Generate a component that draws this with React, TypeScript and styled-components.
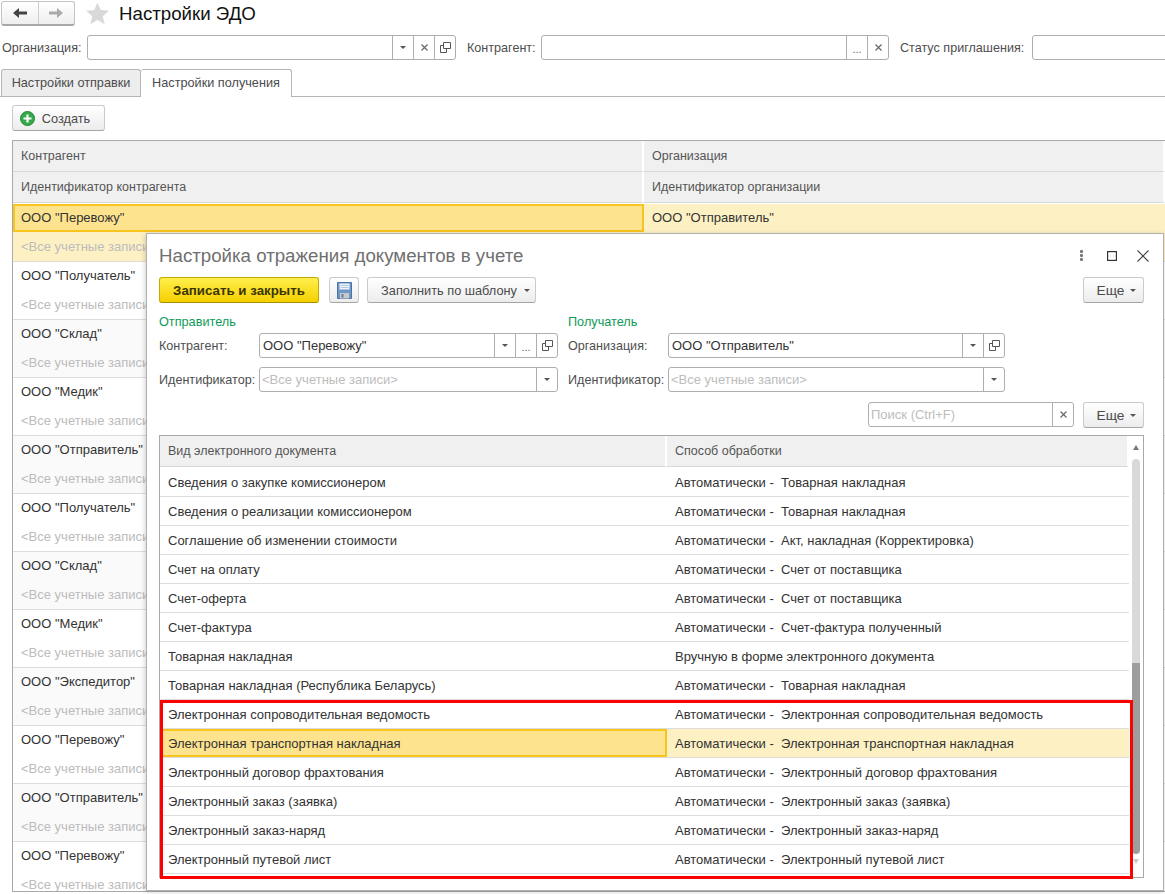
import { FC, ReactNode } from 'react';
import styled, { createGlobalStyle } from 'styled-components';

const GlobalStyle = createGlobalStyle`
  html, body {
    margin: 0;
    padding: 0;
    width: 1165px;
    height: 894px;
    overflow: hidden;
    background: #ffffff;
  }
  * {
    box-sizing: border-box;
  }
`;

const Page = styled.div`
  position: relative;
  width: 1165px;
  height: 894px;
  overflow: hidden;
  font-family: 'Liberation Sans', Arial, sans-serif;
  font-size: 13px;
  color: #4b4b4b;
`;

const TitleBar = styled.div`
  display: flex;
  align-items: center;
  height: 25px;
  margin: 1px 0 0 1px;
`;

const NavGroup = styled.div`
  display: flex;
  width: 74px;
  height: 25px;
  border: 1px solid #c4c4c4;
  border-bottom: 2px solid #a8a8a8;
  border-radius: 3px;
  background: linear-gradient(#ffffff, #efefef);
`;

const NavButton = styled.div<{ $divider?: boolean }>`
  flex: 1;
  display: flex;
  align-items: center;
  justify-content: center;
  border-left: ${(p) => (p.$divider ? '1px solid #d0d0d0' : 'none')};
`;

const StarWrap = styled.div`
  display: flex;
  margin: 0 10px 0 11px;
`;

const PageTitle = styled.h1`
  margin: 0;
  font-size: 18.7px;
  font-weight: 400;
  color: #111111;
`;

const FilterRow = styled.div`
  display: flex;
  align-items: center;
  height: 25px;
  margin-top: 9px;
  white-space: nowrap;
`;

const Label = styled.span<{ $ml?: number; $w?: number }>`
  flex: none;
  margin-left: ${(p) => p.$ml ?? 0}px;
  width: ${(p) => (p.$w ? `${p.$w}px` : 'auto')};
  font-size: 12.6px;
  color: #4e4e4e;
`;

const Field = styled.div<{ $w: number; $ml?: number }>`
  flex: none;
  display: flex;
  width: ${(p) => p.$w}px;
  height: 25px;
  margin-left: ${(p) => p.$ml ?? 0}px;
  border: 1px solid #aeaeae;
  border-radius: 3px;
  background: #ffffff;
`;

const FieldValue = styled.div<{ $muted?: boolean }>`
  flex: 1;
  min-width: 0;
  padding-left: ${(p) => (p.$muted ? 2 : 3)}px;
  line-height: 23px;
  white-space: nowrap;
  overflow: hidden;
  color: ${(p) => (p.$muted ? '#bdbdbd' : '#333333')};
`;

const FieldButton = styled.div`
  flex: none;
  display: flex;
  align-items: center;
  justify-content: center;
  width: 21px;
  border-left: 1px solid #aeaeae;
  color: #666666;
`;

const Tabs = styled.div`
  display: flex;
  height: 28px;
  margin-top: 9px;
  padding-left: 1px;
  border-bottom: 1px solid #b5b5b5;
`;

const Tab = styled.div<{ $active?: boolean }>`
  width: ${(p) => (p.$active ? 151 : 140)}px;
  height: ${(p) => (p.$active ? 28 : 27)}px;
  padding-top: 6px;
  font-size: 12.7px;
  text-align: center;
  border: 1px solid #b5b5b5;
  border-left-width: ${(p) => (p.$active ? 0 : 1)}px;
  border-bottom: none;
  border-radius: 3px 3px 0 0;
  background: ${(p) => (p.$active ? '#ffffff' : '#ededed')};
  color: #4b4b4b;
`;

const Toolbar = styled.div`
  height: 27px;
  margin: 8px 0 8px 12px;
`;

const Button = styled.div<{ $w: number; $ml?: number; $h?: number; $pl?: number; $pr?: number }>`
  flex: none;
  display: flex;
  align-items: center;
  justify-content: center;
  gap: 7px;
  width: ${(p) => p.$w}px;
  height: ${(p) => p.$h ?? 26}px;
  margin-left: ${(p) => p.$ml ?? 0}px;
  padding-left: ${(p) => p.$pl ?? 0}px;
  padding-right: ${(p) => p.$pr ?? 0}px;
  border: 1px solid #cbcbcb;
  border-bottom-color: #a5a5a5;
  border-radius: 3px;
  background: linear-gradient(#ffffff, #ececec);
  font-size: 12.75px;
  color: #4b4b4b;
`;

const MoreButton = styled(Button)`
  gap: 6px;
  padding-left: 6px;
  font-size: 13.7px;
`;

const PrimaryButton = styled(Button)`
  border-color: #c4aa00;
  border-bottom-color: #a58f00;
  background: linear-gradient(#fff04d, #f5d000);
  color: #3c3500;
  font-weight: 700;
  font-size: 13.3px;
`;

const BackTable = styled.div`
  margin-left: 12px;
  border-top: 1px solid #a9a9a9;
  border-left: 1px solid #a9a9a9;
  border-bottom: 1px solid #a9a9a9;
  height: 752px;
  overflow: hidden;
`;

const Row = styled.div<{ $cols: string; $h?: number; $bg?: string; $line?: string }>`
  display: grid;
  grid-template-columns: ${(p) => p.$cols};
  height: ${(p) => p.$h ?? 29}px;
  background: ${(p) => p.$bg ?? 'transparent'};
  border-bottom: 1px solid ${(p) => p.$line ?? 'transparent'};
`;

const HeaderCell = styled.div<{ $pad?: number }>`
  padding-left: ${(p) => p.$pad ?? 8}px;
  line-height: 30px;
  font-size: 12.5px;
  background: #f0f0f0;
  border-right: 2px solid #ffffff;
  border-bottom: 1px solid #d8d8d8;
  color: #555555;
  white-space: nowrap;
`;

const Cell = styled.div<{ $muted?: boolean; $current?: boolean; $pad?: number; $shift?: number }>`
  padding-left: ${(p) => (p.$pad ?? 8) - (p.$current ? 2 : 0)}px;
  line-height: ${(p) => (p.$current ? 24 : 28) + (p.$shift ?? 0)}px;
  white-space: pre;
  overflow: hidden;
  color: ${(p) => (p.$muted ? '#bcbcbc' : '#333333')};
  background: ${(p) => (p.$current ? '#fde38e' : 'transparent')};
  border: ${(p) => (p.$current ? '2px solid #f7c51e' : 'none')};
`;

const Modal = styled.div`
  position: absolute;
  left: 146px;
  top: 233px;
  width: 1018px;
  height: 658px;
  padding: 0 19px 0 12px;
  background: #ffffff;
  border: 1px solid #b0b0b0;
  box-shadow: -1px 1px 5px rgba(0, 0, 0, 0.18);
`;

const ModalHead = styled.div`
  display: flex;
  align-items: center;
  justify-content: space-between;
  height: 43px;
`;

const ModalTitle = styled.div`
  font-size: 18.7px;
  color: #6f6f6f;
`;

const WindowIcons = styled.div`
  display: flex;
  align-items: center;
  gap: 20px;
  margin-right: -5px;

  svg:first-child {
    margin-right: 4px;
  }
`;

const CommandBar = styled.div`
  display: flex;
  align-items: center;
  justify-content: space-between;
`;

const CommandGroup = styled.div`
  display: flex;
  align-items: center;
`;

const Columns = styled.div`
  display: flex;
  margin-top: 12px;
`;

const FieldColumn = styled.div<{ $w: number }>`
  flex: none;
  width: ${(p) => p.$w}px;
`;

const GroupTitle = styled.div`
  height: 18px;
  line-height: 14px;
  font-size: 12.7px;
  color: #0d9b58;
`;

const FormRow = styled.div<{ $mt?: number }>`
  display: flex;
  align-items: center;
  margin-top: ${(p) => p.$mt ?? 0}px;
`;

const SearchRow = styled.div`
  display: flex;
  justify-content: flex-end;
  margin-top: 10px;
`;

const DocTable = styled.div`
  position: relative;
  height: 443px;
  margin-top: 7px;
  padding-right: 14px;
  border: 1px solid #a9a9a9;
  overflow: hidden;
`;

const ScrollBar = styled.div`
  position: absolute;
  top: 0;
  right: 0;
  bottom: 0;
  width: 14px;
  display: flex;
  flex-direction: column;
  align-items: center;
  background: #ffffff;
`;

const ScrollTrack = styled.div`
  width: 8px;
  height: 395px;
  margin-top: 9px;
  border-radius: 4px;
  background: linear-gradient(#d9d9d9 0 204px, #9d9d9d 204px);
`;

const ScrollArrow = styled.div<{ $up?: boolean }>`
  width: 0;
  height: 0;
  margin-top: ${(p) => (p.$up ? 9 : 5)}px;
  border-left: 3px solid transparent;
  border-right: 3px solid transparent;
  border-bottom: ${(p) => (p.$up ? '5px solid #777777' : 'none')};
  border-top: ${(p) => (p.$up ? 'none' : '5px solid #cccccc')};
`;

const RedFrame = styled.div`
  position: absolute;
  left: 160px;
  top: 700px;
  width: 973px;
  height: 179px;
  border: 3px solid #ff0000;
  pointer-events: none;
`;

const Caret = styled.span`
  display: inline-block;
  width: 0;
  height: 0;
  border-left: 3px solid transparent;
  border-right: 3px solid transparent;
  border-top: 3px solid #555555;
`;

const Dots = styled.span`
  font-size: 11px;
  line-height: 1;
  color: #666666;
  margin-top: 4px;
`;

const OpenIcon: FC = () => (
  <svg width="11" height="11" viewBox="0 0 11 11" fill="none" stroke="#555" strokeWidth="1">
    <path d="M3.5 0.5h7v6h-7z" />
    <path d="M3.5 3.5h-3v7h6v-4" />
  </svg>
);

const CrossIcon: FC = () => (
  <svg width="7" height="7" viewBox="0 0 7 7" stroke="#666" strokeWidth="1.2">
    <path d="M0.5 0.5l6 6M6.5 0.5l-6 6" />
  </svg>
);

const Arrow: FC<{ dir: 'left' | 'right'; color: string }> = ({ dir, color }) => (
  <svg width="14" height="10" viewBox="0 0 14 10" fill={color}>
    {dir === 'left' ? <path d="M0 5l6-5v3.500h8v3H6V10z" /> : <path d="M14 5L8 0v3.500H0v3h8V10z" />}
  </svg>
);

const Star: FC = () => (
  <svg width="23" height="23" viewBox="0 0 23 22" fill="#d9d9d9">
    <path d="M11.500 0l3.300 7.600 8.200.7-6.200 5.400 1.900 8.100-7.200-4.300-7.200 4.300 1.900-8.100L0 8.300l8.200-.7z" />
  </svg>
);

const PlusIcon: FC = () => (
  <svg width="15" height="15" viewBox="0 0 15 15">
    <circle cx="7.500" cy="7.500" r="7" fill="#35a94a" stroke="#1f8a35" />
    <path d="M7.500 3.500v8M3.500 7.500h8" stroke="#ffffff" strokeWidth="2.200" />
  </svg>
);

const SaveIcon: FC = () => (
  <svg width="15" height="17" viewBox="0 0 15 17">
    <path d="M0.500 0.500h14v16h-14z" fill="#6f97c6" stroke="#4a74a6" />
    <rect x="2.500" y="1.500" width="10" height="6" fill="#eef3f9" />
    <path d="M3.500 3.500h8M3.500 5.500h8" stroke="#b5c8de" />
    <rect x="3" y="11" width="9" height="5.500" fill="#c9c9c9" />
    <rect x="4.500" y="12" width="2" height="3.500" fill="#5a7da6" />
  </svg>
);

const KebabIcon: FC = () => (
  <svg width="3" height="11" viewBox="0 0 3 11" fill="#777">
    <rect y="0" width="3" height="3" rx="1" />
    <rect y="4" width="3" height="3" rx="1" />
    <rect y="8" width="3" height="3" rx="1" />
  </svg>
);

const MaximizeIcon: FC = () => (
  <svg width="10" height="10" viewBox="0 0 10 10" fill="none" stroke="#333" strokeWidth="1.200">
    <rect x="0.600" y="0.600" width="8.800" height="8.800" />
  </svg>
);

const CloseIcon: FC = () => (
  <svg width="12" height="12" viewBox="0 0 12 12" stroke="#444" strokeWidth="1.100">
    <path d="M0.500 0.500l11 11M11.500 0.500l-11 11" />
  </svg>
);

const ActionField: FC<{
  w: number;
  ml?: number;
  value?: string;
  muted?: boolean;
  children?: ReactNode;
}> = ({ w, ml, value, muted, children }) => (
  <Field $w={w} $ml={ml}>
    <FieldValue $muted={muted}>{value}</FieldValue>
    {children}
  </Field>
);

const backRows = [
  'ООО "Перевожу"',
  'ООО "Получатель"',
  'ООО "Склад"',
  'ООО "Медик"',
  'ООО "Отправитель"',
  'ООО "Получатель"',
  'ООО "Склад"',
  'ООО "Медик"',
  'ООО "Экспедитор"',
  'ООО "Перевожу"',
  'ООО "Отправитель"',
  'ООО "Перевожу"',
];

const docRows = [
  ['Сведения о закупке комиссионером', 'Автоматически -  Товарная накладная'],
  ['Сведения о реализации комиссионером', 'Автоматически -  Товарная накладная'],
  ['Соглашение об изменении стоимости', 'Автоматически -  Акт, накладная (Корректировка)'],
  ['Счет на оплату', 'Автоматически -  Счет от поставщика'],
  ['Счет-оферта', 'Автоматически -  Счет от поставщика'],
  ['Счет-фактура', 'Автоматически -  Счет-фактура полученный'],
  ['Товарная накладная', 'Вручную в форме электронного документа'],
  ['Товарная накладная (Республика Беларусь)', 'Автоматически -  Товарная накладная'],
  ['Электронная сопроводительная ведомость', 'Автоматически -  Электронная сопроводительная ведомость'],
  ['Электронная транспортная накладная', 'Автоматически -  Электронная транспортная накладная'],
  ['Электронный договор фрахтования', 'Автоматически -  Электронный договор фрахтования'],
  ['Электронный заказ (заявка)', 'Автоматически -  Электронный заказ (заявка)'],
  ['Электронный заказ-наряд', 'Автоматически -  Электронный заказ-наряд'],
  ['Электронный путевой лист', 'Автоматически -  Электронный путевой лист'],
];

const BACK_COLS = '631px 1fr';
const DOC_COLS = '507px 1fr';

export default function App() {
  return (
    <Page>
      <GlobalStyle />
      <TitleBar>
        <NavGroup>
          <NavButton>
            <Arrow dir="left" color="#444444" />
          </NavButton>
          <NavButton $divider>
            <Arrow dir="right" color="#aaaaaa" />
          </NavButton>
        </NavGroup>
        <StarWrap>
          <Star />
        </StarWrap>
        <PageTitle>Настройки ЭДО</PageTitle>
      </TitleBar>

      <FilterRow>
        <Label $ml={2} $w={85}>Организация:</Label>
        <ActionField w={369}>
          <FieldButton><Caret /></FieldButton>
          <FieldButton><CrossIcon /></FieldButton>
          <FieldButton><OpenIcon /></FieldButton>
        </ActionField>
        <Label $ml={11} $w={74}>Контрагент:</Label>
        <ActionField w={348}>
          <FieldButton><Dots>...</Dots></FieldButton>
          <FieldButton><CrossIcon /></FieldButton>
        </ActionField>
        <Label $ml={11} $w={132}>Статус приглашения:</Label>
        <ActionField w={200} />
      </FilterRow>

      <Tabs>
        <Tab>Настройки отправки</Tab>
        <Tab $active>Настройки получения</Tab>
      </Tabs>

      <Toolbar>
        <Button $w={93} $pr={7}>
          <PlusIcon />
          Создать
        </Button>
      </Toolbar>

      <BackTable>
        <Row $cols={BACK_COLS} $h={31}>
          <HeaderCell>Контрагент</HeaderCell>
          <HeaderCell>Организация</HeaderCell>
        </Row>
        <Row $cols={BACK_COLS} $h={32}>
          <HeaderCell>Идентификатор контрагента</HeaderCell>
          <HeaderCell>Идентификатор организации</HeaderCell>
        </Row>
        {backRows.map((name, i) => {
          const selected = i === 0;
          const bg = selected ? '#fdf1c4' : i % 2 === 1 ? '#ffffff' : '#fafafa';
          return (
            <div key={i}>
              <Row $cols={BACK_COLS} $bg={bg}>
                <Cell $current={selected}>{name}</Cell>
                <Cell>{selected ? 'ООО "Отправитель"' : ''}</Cell>
              </Row>
              <Row $cols={BACK_COLS} $bg={bg} $line="#dddddd">
                <Cell $muted>{'<Все учетные записи>'}</Cell>
                <Cell />
              </Row>
            </div>
          );
        })}
      </BackTable>

      <Modal>
        <ModalHead>
          <ModalTitle>Настройка отражения документов в учете</ModalTitle>
          <WindowIcons>
            <KebabIcon />
            <MaximizeIcon />
            <CloseIcon />
          </WindowIcons>
        </ModalHead>

        <CommandBar>
          <CommandGroup>
            <PrimaryButton $w={160}>Записать и закрыть</PrimaryButton>
            <Button $w={30} $ml={10}><SaveIcon /></Button>
            <Button $w={169} $ml={8} $pl={8}>
              Заполнить по шаблону
              <Caret />
            </Button>
          </CommandGroup>
          <MoreButton $w={61}>
            Еще
            <Caret />
          </MoreButton>
        </CommandBar>

        <Columns>
          <FieldColumn $w={409}>
            <GroupTitle>Отправитель</GroupTitle>
            <FormRow>
              <Label $w={100}>Контрагент:</Label>
              <ActionField w={299} value={'ООО "Перевожу"'}>
                <FieldButton><Caret /></FieldButton>
                <FieldButton><Dots>...</Dots></FieldButton>
                <FieldButton><OpenIcon /></FieldButton>
              </ActionField>
            </FormRow>
            <FormRow $mt={9}>
              <Label $w={100}>Идентификатор:</Label>
              <ActionField w={299} value="<Все учетные записи>" muted>
                <FieldButton><Caret /></FieldButton>
              </ActionField>
            </FormRow>
          </FieldColumn>
          <FieldColumn $w={437}>
            <GroupTitle>Получатель</GroupTitle>
            <FormRow>
              <Label $w={100}>Организация:</Label>
              <ActionField w={337} value={'ООО "Отправитель"'}>
                <FieldButton><Caret /></FieldButton>
                <FieldButton><OpenIcon /></FieldButton>
              </ActionField>
            </FormRow>
            <FormRow $mt={9}>
              <Label $w={100}>Идентификатор:</Label>
              <ActionField w={337} value="<Все учетные записи>" muted>
                <FieldButton><Caret /></FieldButton>
              </ActionField>
            </FormRow>
          </FieldColumn>
        </Columns>

        <SearchRow>
          <ActionField w={206} value="Поиск (Ctrl+F)" muted>
            <FieldButton><CrossIcon /></FieldButton>
          </ActionField>
          <MoreButton $w={61} $ml={9}>
            Еще
            <Caret />
          </MoreButton>
        </SearchRow>

        <DocTable>
          <Row $cols={DOC_COLS} $h={32}>
            <HeaderCell>Вид электронного документа</HeaderCell>
            <HeaderCell>Способ обработки</HeaderCell>
          </Row>
          {docRows.map(([doc, mode], i) => {
            const selected = i === 9;
            return (
              <Row key={i} $cols={DOC_COLS} $bg={selected ? '#fdf1c4' : '#ffffff'} $line="#dddddd">
                <Cell $current={selected} $shift={2}>{doc}</Cell>
                <Cell $shift={2}>{mode}</Cell>
              </Row>
            );
          })}
          <ScrollBar>
            <ScrollArrow $up />
            <ScrollTrack />
            <ScrollArrow />
          </ScrollBar>
        </DocTable>
      </Modal>

      <RedFrame />
    </Page>
  );
}
